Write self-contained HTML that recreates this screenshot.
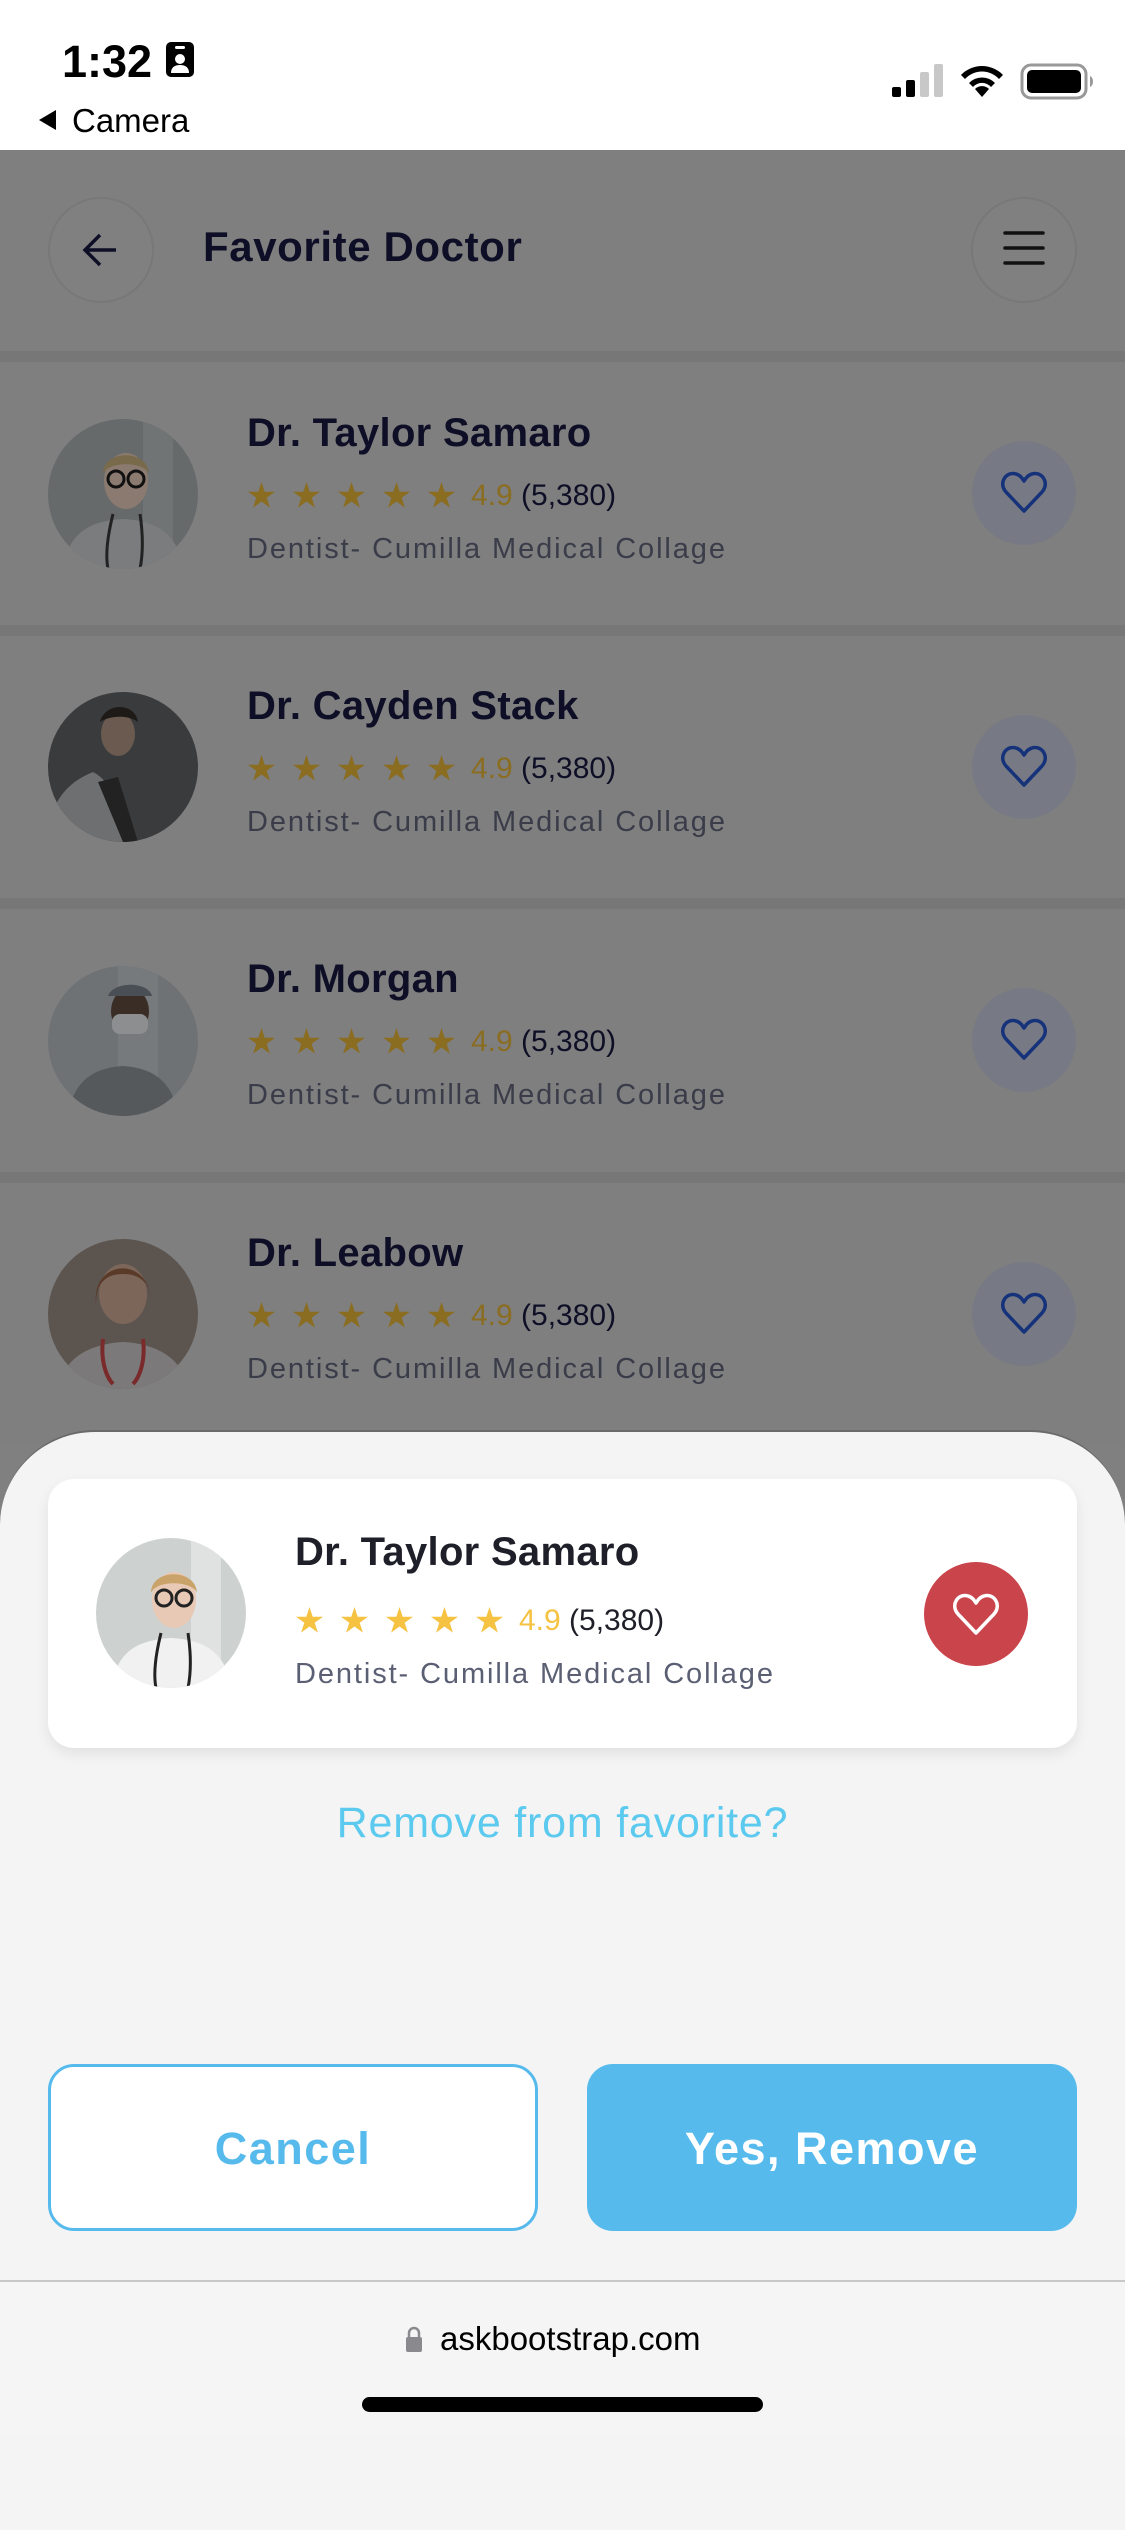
<!DOCTYPE html>
<html><head><meta charset="utf-8">
<style>
*{margin:0;padding:0;box-sizing:border-box}
body{width:1125px;height:2436px;position:relative;overflow:hidden;background:#808080;font-family:"Liberation Sans",sans-serif}
.a{position:absolute}
.t{position:absolute;white-space:nowrap;line-height:1}
.sep{position:absolute;left:0;width:1125px;height:11px;background:#777}
.row{position:absolute;left:0;width:1125px;height:263px;background:#7f7f7f}
.name{font-weight:bold;font-size:40px;color:#0e0f26;letter-spacing:0.3px}
.rate{font-size:30px}
.spec{font-size:29px;color:#3a3c49;letter-spacing:1.9px}
.hb{position:absolute;width:104px;height:104px;border-radius:50%;background:#777a84}
.av{position:absolute;width:150px;height:150px;border-radius:50%;overflow:hidden}
</style></head><body>
<svg width="0" height="0" style="position:absolute"><defs><path id="st" d="M13.5 0l3.2 9.8h10.3l-8.3 6 3.2 9.8-8.4-6.1-8.4 6.1 3.2-9.8-8.3-6h10.3z"/><g id="stars"><use href="#st" x="0"/><use href="#st" x="45"/><use href="#st" x="90"/><use href="#st" x="135"/><use href="#st" x="180"/></g></defs></svg>
<!-- status bar -->
<div class="a" style="left:0;top:0;width:1125px;height:150px;background:#fff"></div>
<div class="t" style="left:62px;top:39px;font-size:45px;font-weight:bold;color:#000">1:32</div>
<svg class="a" style="left:166px;top:42px" width="28" height="35" viewBox="0 0 28 35"><rect x="0" y="0" width="28" height="35" rx="5" fill="#000"/><rect x="9" y="4" width="10" height="3" rx="1.5" fill="#fff"/><circle cx="14" cy="17" r="5" fill="#fff"/><path d="M5 31c0-6 4-8 9-8s9 2 9 8z" fill="#fff"/></svg>
<svg class="a" style="left:36px;top:108px" width="24" height="24" viewBox="0 0 24 24"><path d="M20 2L3 12l17 10z" fill="#000"/></svg>
<div class="t" style="left:72px;top:104px;font-size:33px;color:#000">Camera</div>
<svg class="a" style="left:892px;top:64px" width="52" height="34" viewBox="0 0 52 34"><rect x="0" y="23" width="9" height="10" rx="2" fill="#000"/><rect x="14" y="16" width="9" height="17" rx="2" fill="#000"/><rect x="28" y="8" width="9" height="25" rx="2" fill="#c8c8c8"/><rect x="42" y="0" width="9" height="33" rx="2" fill="#c8c8c8"/></svg>
<svg class="a" style="left:958px;top:64px" width="48" height="34" viewBox="0 0 48 34"><path d="M24 33l-7-8a10 10 0 0 1 14 0z" fill="#000"/><path d="M11 19a18 18 0 0 1 26 0l-4 4a12 12 0 0 0-18 0z" fill="#000"/><path d="M3 11a29 29 0 0 1 42 0l-4 4a23 23 0 0 0-34 0z" fill="#000"/></svg>
<svg class="a" style="left:1020px;top:63px" width="74" height="37" viewBox="0 0 74 37"><rect x="2" y="2" width="64" height="33" rx="9" fill="none" stroke="#999" stroke-width="3"/><rect x="7" y="7" width="54" height="23" rx="5" fill="#000"/><path d="M70 13v11c2-1 3-3 3-5.5s-1-4.5-3-5.5z" fill="#999"/></svg>

<!-- header -->
<div class="a" style="left:0;top:150px;width:1125px;height:201px;background:#7f7f7f"></div>
<div class="a" style="left:48px;top:197px;width:106px;height:106px;border-radius:50%;border:2px solid #787878;background:#808080"></div>
<svg class="a" style="left:80px;top:230px" width="40" height="40" viewBox="0 0 40 40"><path d="M36 20H6M20 5L5 20l15 15" fill="none" stroke="#0e0f26" stroke-width="3.5"/></svg>
<div class="t" style="left:203px;top:226px;font-size:42px;font-weight:bold;color:#0e0f26;letter-spacing:0.6px">Favorite Doctor</div>
<div class="a" style="left:971px;top:197px;width:106px;height:106px;border-radius:50%;border:2px solid #787878;background:#808080"></div>
<svg class="a" style="left:1002px;top:230px" width="44" height="40" viewBox="0 0 44 40"><path d="M3 3h38M3 18h38M3 33h38" stroke="#111" stroke-width="3.5" stroke-linecap="round"/></svg>
<div class="sep" style="top:351px"></div>

<!-- rows -->
<div class="row" style="top:362px"></div><div class="sep" style="top:625px"></div>
<div class="row" style="top:636px"></div><div class="sep" style="top:898px"></div>
<div class="row" style="top:909px"></div><div class="sep" style="top:1172px"></div>
<div class="row" style="top:1183px"></div>

<!-- row 1 -->
<div class="av" style="left:48px;top:419px"><svg width="150" height="150" viewBox="0 0 150 150"><rect width="150" height="150" fill="#666a6b"/><rect x="95" y="0" width="30" height="150" fill="#707474"/><path d="M15 150c5-35 25-48 60-50 35 2 55 15 60 50z" fill="#7a7c7d"/><ellipse cx="78" cy="62" rx="22" ry="28" fill="#8a7a70"/><path d="M55 55c0-25 45-25 46 0-4-12-40-14-46 0z" fill="#7a6a4c"/><circle cx="68" cy="60" r="8" fill="none" stroke="#111" stroke-width="3"/><circle cx="88" cy="60" r="8" fill="none" stroke="#111" stroke-width="3"/><path d="M65 95c-5 20-8 40-5 55M92 95c3 20 3 40 0 55" stroke="#222" stroke-width="3" fill="none"/></svg></div>
<div class="t name" style="left:247px;top:413px">Dr. Taylor Samaro</div>
<svg class="a" style="left:248px;top:482px" width="210" height="27" fill="#8a6d20"><use href="#stars"/></svg>
<div class="t rate" style="left:471px;top:481px;color:#8a6d20">4.9 <span style="color:#0e0f26">(5,380)</span></div>
<div class="t spec" style="left:247px;top:535px">Dentist- Cumilla Medical Collage</div>
<div class="hb" style="left:972px;top:441px"></div>

<!-- row 2 -->
<div class="av" style="left:48px;top:692px"><svg width="150" height="150" viewBox="0 0 150 150"><rect width="150" height="150" fill="#3a3b3d"/><path d="M0 150c0-40 20-60 45-70 20 10 30 40 35 70z" fill="#6e6f70"/><path d="M50 90l25 60h15l-20-65z" fill="#222"/><ellipse cx="70" cy="42" rx="17" ry="22" fill="#6a5a50"/><path d="M52 30c5-20 35-20 38 0-10-8-30-6-38 0z" fill="#1e1a18"/></svg></div>
<div class="t name" style="left:247px;top:686px">Dr. Cayden Stack</div>
<svg class="a" style="left:248px;top:755px" width="210" height="27" fill="#8a6d20"><use href="#stars"/></svg>
<div class="t rate" style="left:471px;top:754px;color:#8a6d20">4.9 <span style="color:#0e0f26">(5,380)</span></div>
<div class="t spec" style="left:247px;top:808px">Dentist- Cumilla Medical Collage</div>
<div class="hb" style="left:972px;top:715px"></div>

<!-- row 3 -->
<div class="av" style="left:48px;top:966px"><svg width="150" height="150" viewBox="0 0 150 150"><rect width="150" height="150" fill="#6f7275"/><rect x="70" y="0" width="40" height="150" fill="#777a7d"/><path d="M20 150c5-35 25-48 55-50 30 2 50 15 55 50z" fill="#55595c"/><ellipse cx="82" cy="45" rx="19" ry="23" fill="#3a2d26"/><path d="M60 30c5-15 40-15 44 0z" fill="#4a4e55"/><rect x="64" y="48" width="36" height="20" rx="8" fill="#8c8e90"/></svg></div>
<div class="t name" style="left:247px;top:959px">Dr. Morgan</div>
<svg class="a" style="left:248px;top:1028px" width="210" height="27" fill="#8a6d20"><use href="#stars"/></svg>
<div class="t rate" style="left:471px;top:1027px;color:#8a6d20">4.9 <span style="color:#0e0f26">(5,380)</span></div>
<div class="t spec" style="left:247px;top:1081px">Dentist- Cumilla Medical Collage</div>
<div class="hb" style="left:972px;top:988px"></div>

<!-- row 4 -->
<div class="av" style="left:48px;top:1239px"><svg width="150" height="150" viewBox="0 0 150 150"><rect width="150" height="150" fill="#5c544f"/><path d="M10 150c5-30 30-45 65-47 35 2 60 17 65 47z" fill="#7b7979"/><ellipse cx="75" cy="55" rx="24" ry="30" fill="#7c665a"/><path d="M48 65c-5-45 55-50 55 0 0-20-10-30-28-30s-27 10-27 30z" fill="#5a3a28"/><path d="M55 100c-3 25 5 40 10 45M95 100c3 25-5 40-10 45" stroke="#7a2a2a" stroke-width="4" fill="none"/></svg></div>
<div class="t name" style="left:247px;top:1233px">Dr. Leabow</div>
<svg class="a" style="left:248px;top:1302px" width="210" height="27" fill="#8a6d20"><use href="#stars"/></svg>
<div class="t rate" style="left:471px;top:1301px;color:#8a6d20">4.9 <span style="color:#0e0f26">(5,380)</span></div>
<div class="t spec" style="left:247px;top:1355px">Dentist- Cumilla Medical Collage</div>
<div class="hb" style="left:972px;top:1262px"></div>

<!-- heart outlines on blue buttons -->
<svg class="a" style="left:1001px;top:470px" width="46" height="44" viewBox="0 0 46 44"><path d="M23 41L5 22C-3 13 5 1 15 4c4 1 6 4 8 7 2-3 4-6 8-7 10-3 18 9 10 18z" fill="none" stroke="#15327a" stroke-width="3.5" stroke-linejoin="round"/></svg>
<svg class="a" style="left:1001px;top:744px" width="46" height="44" viewBox="0 0 46 44"><path d="M23 41L5 22C-3 13 5 1 15 4c4 1 6 4 8 7 2-3 4-6 8-7 10-3 18 9 10 18z" fill="none" stroke="#15327a" stroke-width="3.5" stroke-linejoin="round"/></svg>
<svg class="a" style="left:1001px;top:1017px" width="46" height="44" viewBox="0 0 46 44"><path d="M23 41L5 22C-3 13 5 1 15 4c4 1 6 4 8 7 2-3 4-6 8-7 10-3 18 9 10 18z" fill="none" stroke="#15327a" stroke-width="3.5" stroke-linejoin="round"/></svg>
<svg class="a" style="left:1001px;top:1291px" width="46" height="44" viewBox="0 0 46 44"><path d="M23 41L5 22C-3 13 5 1 15 4c4 1 6 4 8 7 2-3 4-6 8-7 10-3 18 9 10 18z" fill="none" stroke="#15327a" stroke-width="3.5" stroke-linejoin="round"/></svg>

<!-- bottom sheet -->
<div class="a" style="left:0;top:1430px;width:1125px;height:1100px;background:#f4f4f4;border-radius:95px 95px 0 0;border-top:2px solid #6a6a6a"></div>
<div class="a" style="left:48px;top:1479px;width:1029px;height:269px;background:#fff;border-radius:26px;box-shadow:0 6px 14px rgba(0,0,0,0.08)"></div>
<div class="av" style="left:96px;top:1538px"><svg width="150" height="150" viewBox="0 0 150 150"><rect width="150" height="150" fill="#cdd2d1"/><rect x="95" y="0" width="30" height="150" fill="#dfe2e1"/><path d="M15 150c5-35 25-48 60-50 35 2 55 15 60 50z" fill="#f1f1f1"/><ellipse cx="78" cy="62" rx="22" ry="28" fill="#e8c9b6"/><path d="M55 55c0-25 45-25 46 0-4-12-40-14-46 0z" fill="#c9a36a"/><circle cx="68" cy="60" r="8" fill="none" stroke="#222" stroke-width="3"/><circle cx="88" cy="60" r="8" fill="none" stroke="#222" stroke-width="3"/><path d="M65 95c-5 20-8 40-5 55M92 95c3 20 3 40 0 55" stroke="#222" stroke-width="3" fill="none"/></svg></div>
<div class="t name" style="left:295px;top:1532px;color:#1e1f28">Dr. Taylor Samaro</div>
<svg class="a" style="left:296px;top:1607px" width="210" height="27" fill="#f5c242"><use href="#stars"/></svg>
<div class="t rate" style="left:519px;top:1606px;color:#f5c242">4.9 <span style="color:#1e1f28">(5,380)</span></div>
<div class="t spec" style="left:295px;top:1660px;color:#5b5f73">Dentist- Cumilla Medical Collage</div>
<div class="a" style="left:924px;top:1562px;width:104px;height:104px;border-radius:50%;background:#c9444b"></div>
<svg class="a" style="left:953px;top:1592px" width="46" height="44" viewBox="0 0 46 44"><path d="M23 41L5 22C-3 13 5 1 15 4c4 1 6 4 8 7 2-3 4-6 8-7 10-3 18 9 10 18z" fill="none" stroke="#fff" stroke-width="3.5" stroke-linejoin="round"/></svg>

<div class="t" style="left:0;width:1125px;text-align:center;top:1802px;font-size:43px;color:#5ccaef;letter-spacing:0.8px">Remove from favorite?</div>

<div class="a" style="left:48px;top:2064px;width:490px;height:167px;border:3px solid #57baed;border-radius:26px;background:#fff"></div>
<div class="t" style="left:48px;width:490px;text-align:center;top:2126px;font-size:45px;font-weight:bold;color:#57baed;letter-spacing:1.5px">Cancel</div>
<div class="a" style="left:587px;top:2064px;width:490px;height:167px;border-radius:26px;background:#57baed"></div>
<div class="t" style="left:587px;width:490px;text-align:center;top:2126px;font-size:45px;font-weight:bold;color:#fff;letter-spacing:1.5px">Yes, Remove</div>

<!-- browser bar -->
<div class="a" style="left:0;top:2280px;width:1125px;height:156px;background:#f5f5f5;border-top:2px solid #c8c8c8"></div>
<svg class="a" style="left:405px;top:2325px" width="18" height="28" viewBox="0 0 18 28"><path d="M4 12V8a5 5 0 0 1 10 0v4" fill="none" stroke="#8a8a8e" stroke-width="2.5"/><rect x="1" y="12" width="16" height="15" rx="2" fill="#8a8a8e"/></svg>
<div class="t" style="left:440px;top:2322px;font-size:33px;color:#000">askbootstrap.com</div>
<div class="a" style="left:362px;top:2397px;width:401px;height:15px;border-radius:8px;background:#000"></div>
</body></html>
